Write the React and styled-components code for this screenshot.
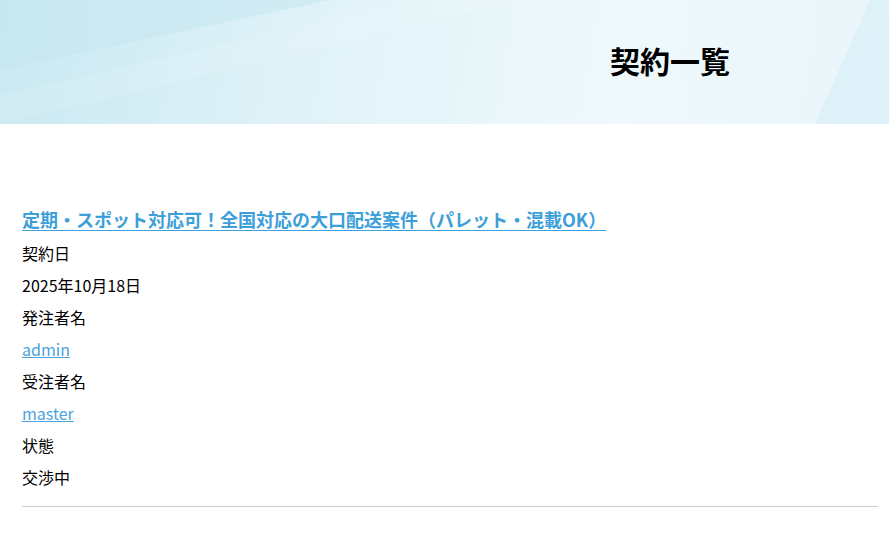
import React from "react";
import styled, { createGlobalStyle } from "styled-components";

const GlobalStyle = createGlobalStyle`
  body {
    margin: 0;
    font-family: "Noto Sans CJK JP", "Noto Sans", sans-serif;
    color: #000;
    background: #fff;
  }
`;

const contract = {
  title: "定期・スポット対応可！全国対応の大口配送案件（パレット・混載OK）",
  date: "2025年10月18日",
  client: "admin",
  contractor: "master",
  status: "交渉中",
};

export default function App() {
  return (
    <>
      <GlobalStyle />
      <Header>
        <Streaks viewBox="0 0 889 124" preserveAspectRatio="none">
          <path d="M0 70 L330 0 L0 0 Z" fill="#c3e6f0" opacity="0.5" />
          <path d="M0 124 L520 0 L420 0 L0 95 Z" fill="#ffffff" opacity="0.1" />
          <path d="M815 124 L870 0 L889 0 L889 124 Z" fill="#d9eff7" opacity="0.7" />
          <path d="M560 124 L889 20 L889 0 L700 124 Z" fill="#ffffff" opacity="0.08" />
        </Streaks>
        <Title>契約一覧</Title>
      </Header>
      <Main>
        <Item>
          <TitleLink href="#">{contract.title}</TitleLink>
          <Fields>
            <Line>契約日</Line>
            <Line>{contract.date}</Line>
            <Line>発注者名</Line>
            <Line>
              <UserLink href="#">{contract.client}</UserLink>
            </Line>
            <Line>受注者名</Line>
            <Line>
              <UserLink href="#">{contract.contractor}</UserLink>
            </Line>
            <Line>状態</Line>
            <Line>{contract.status}</Line>
          </Fields>
        </Item>
      </Main>
    </>
  );
}

const Header = styled.header`
  position: relative;
  height: 124px;
  display: flex;
  align-items: center;
  padding-left: 610px;
  overflow: hidden;
  background: linear-gradient(100deg, #c9e9f2 0%, #e0f2f8 35%, #eff9fc 70%, #e8f5fa 100%);
`;

const Streaks = styled.svg`
  position: absolute;
  inset: 0;
  width: 100%;
  height: 100%;
`;

const Title = styled.h1`
  position: relative;
  margin: 0 0 4px;
  font-size: 30px;
  font-weight: 700;
`;

const Main = styled.main`
  padding: 82px 11px 0 22px;
`;

const Item = styled.section`
  border-bottom: 1px solid #cccccc;
  padding-bottom: 13px;
`;

const TitleLink = styled.a`
  display: inline-block;
  font-size: 18px;
  font-weight: 700;
  line-height: 26px;
  color: #3d9fd9;
  text-decoration: underline;
  text-underline-offset: 3px;
  margin-bottom: 5px;
`;

const Fields = styled.div`
  display: flex;
  flex-direction: column;
`;

const Line = styled.div`
  font-size: 16px;
  line-height: 32px;
`;

const UserLink = styled.a`
  color: #4aa3dc;
  text-decoration: underline;
`;
